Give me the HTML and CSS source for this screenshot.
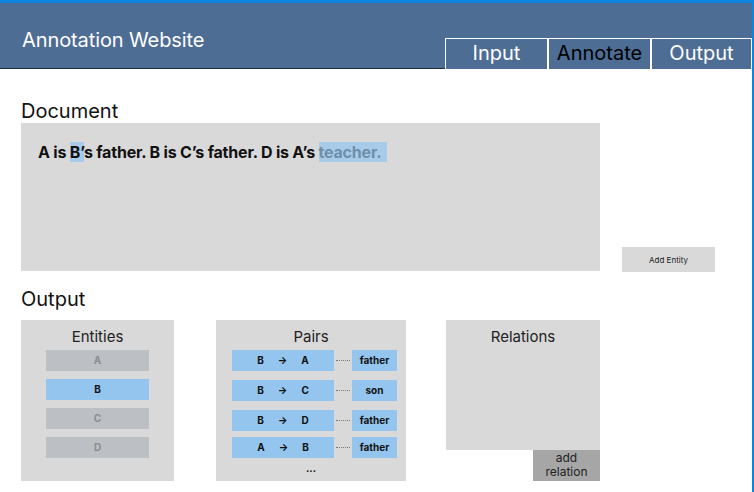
FILE: index.html
```html
<!DOCTYPE html>
<html>
<head>
<meta charset="utf-8">
<link rel="stylesheet" href="styles.css">
</head>
<body>
<div class="frame">
  <header class="header">
    <div class="title">Annotation Website</div>
    <nav class="tabs">
      <div class="tab">Input</div>
      <div class="tab active">Annotate</div>
      <div class="tab">Output</div>
    </nav>
  </header>
  <main class="main">
    <h2 class="label doc-label">Document</h2>
    <div class="doc-row">
      <div class="doc">
        <p class="doc-text">A is <span class="hl">B’</span>s father. B is C’s father. D is A’s <span class="hl hl-soft">teacher.</span></p>
      </div>
      <button class="add-entity">Add Entity</button>
    </div>
    <h2 class="label out-label">Output</h2>
    <div class="out-row">
      <section class="panel entities">
        <h3 class="panel-title">Entities</h3>
        <div class="ent-list">
          <div class="ent">A</div>
          <div class="ent sel">B</div>
          <div class="ent">C</div>
          <div class="ent">D</div>
        </div>
      </section>
      <section class="panel pairs">
        <h3 class="panel-title">Pairs</h3>
        <div class="pair-list">
          <div class="pair"><div class="pair-l"><span>B</span><span class="arr">→</span><span>A</span></div><div class="dots"></div><div class="pair-r">father</div></div>
          <div class="pair"><div class="pair-l"><span>B</span><span class="arr">→</span><span>C</span></div><div class="dots"></div><div class="pair-r">son</div></div>
          <div class="pair"><div class="pair-l"><span>B</span><span class="arr">→</span><span>D</span></div><div class="dots"></div><div class="pair-r">father</div></div>
          <div class="pair"><div class="pair-l"><span>A</span><span class="arr">→</span><span>B</span></div><div class="dots"></div><div class="pair-r">father</div></div>
        </div>
        <div class="more">...</div>
      </section>
      <div class="rel-col">
        <section class="panel relations">
          <h3 class="panel-title">Relations</h3>
        </section>
        <button class="add-rel"><span class="rel-line">add</span><span class="rel-line">relation</span></button>
      </div>
    </div>
  </main>
</div>
</body>
</html>
```

FILE: styles.css
```css
* { box-sizing: border-box; }
html, body { margin: 0; padding: 0; background: #fff; }
body { font-family: Inter, "Noto Sans", sans-serif; color: #111; }

.frame {
  width: 754px;
  height: 492px;
  border-top: 3px solid #0b86dc;
  border-right: 2px solid #0b86dc;
  overflow: hidden;
}

.header {
  height: 66px;
  background: #4e6d95;
  display: flex;
  justify-content: space-between;
  align-items: flex-end;
  border-bottom: 1px solid #1e2b3b;
}
.title {
  color: #fff;
  font-size: 20px;
  padding-left: 22px;
  align-self: flex-start;
  margin-top: 25px;
  letter-spacing: -0.1px;
}
.tabs {
  display: flex;
  margin-bottom: -1px;
}
.tab {
  width: 103px;
  height: 31px;
  border: 1px solid #fff;
  border-bottom: none;
  background: #4e6d95;
  color: #fff;
  font-size: 20px;
  text-align: center;
  line-height: 29px;
}
.tab:last-child { width: 101px; }
.tab.active { color: #000; }

.main { padding-left: 21px; }
.label {
  margin: 0;
  font-weight: 400;
  font-size: 20px;
  line-height: 24px;
}
.doc-label { margin-top: 30px; }
.doc-row {
  display: flex;
  align-items: flex-end;
}
.doc {
  width: 579px;
  height: 148px;
  background: #d9d9d9;
  padding: 19px 17px;
}
.doc-text {
  margin: 0;
  font-weight: 700;
  font-size: 16px;
  line-height: 20px;
  letter-spacing: -0.2px;
}
.hl { background: #a9cbea; }
.hl-soft { color: #6f8fab; padding: 0 6px 0 0; }
.add-entity {
  margin-left: 22px;
  margin-bottom: -1px;
  width: 93px;
  height: 25px;
  border: none;
  background: #d9d9d9;
  font-family: Inter, sans-serif;
  font-size: 8px;
  color: #222;
  padding: 0;
}

.out-label { margin-top: 16px; }
.out-row {
  display: flex;
  align-items: flex-start;
  margin-top: 9px;
}
.panel {
  background: #d9d9d9;
  display: flex;
  flex-direction: column;
  align-items: center;
}
.panel-title {
  margin: 0;
  font-weight: 400;
  font-size: 15px;
  line-height: 18px;
  margin-top: 8px;
  color: #222;
}
.entities { width: 153px; height: 161px; }
.ent-list { display: flex; flex-direction: column; gap: 8px; margin-top: 4px; }
.ent {
  width: 103px;
  height: 21px;
  background: #bcc0c5;
  color: #8b8d90;
  font-size: 10px;
  font-weight: 700;
  text-align: center;
  line-height: 20px;
}
.ent.sel { background: #93c5ef; color: #111; }

.pairs { width: 190px; height: 161px; margin-left: 42px; }
.pair-list {
  display: flex;
  flex-direction: column;
  margin-top: 4px;
  gap: 9px;
  align-self: flex-start;
  margin-left: 16px;
}
.pair:nth-child(4) { margin-top: -3px; }
.pair { display: flex; align-items: center; }
.pair-l {
  width: 102px;
  height: 21px;
  background: #93c5ef;
  display: flex;
  justify-content: center;
  gap: 14px;
  font-size: 10px;
  font-weight: 700;
  line-height: 20px;
}
.dots {
  width: 14px;
  border-top: 1px dotted #777;
  margin: 0 2px;
}
.pair-r {
  width: 45px;
  height: 21px;
  background: #93c5ef;
  font-size: 10px;
  font-weight: 700;
  text-align: center;
  line-height: 20px;
}
.more {
  font-size: 10px;
  font-weight: 700;
  margin-top: 3px;
  line-height: 14px;
}

.rel-col {
  margin-left: 40px;
  width: 154px;
  display: flex;
  flex-direction: column;
  align-items: flex-end;
}
.relations { width: 154px; height: 130px; }
.add-rel {
  width: 67px;
  height: 31px;
  border: none;
  background: #a6a6a6;
  font-family: Inter, sans-serif;
  font-size: 12px;
  color: #222;
  padding: 1px 0 0;
  display: flex;
  flex-direction: column;
  align-items: center;
  justify-content: flex-start;
}
.rel-line { display: block; line-height: 14px; }
```
